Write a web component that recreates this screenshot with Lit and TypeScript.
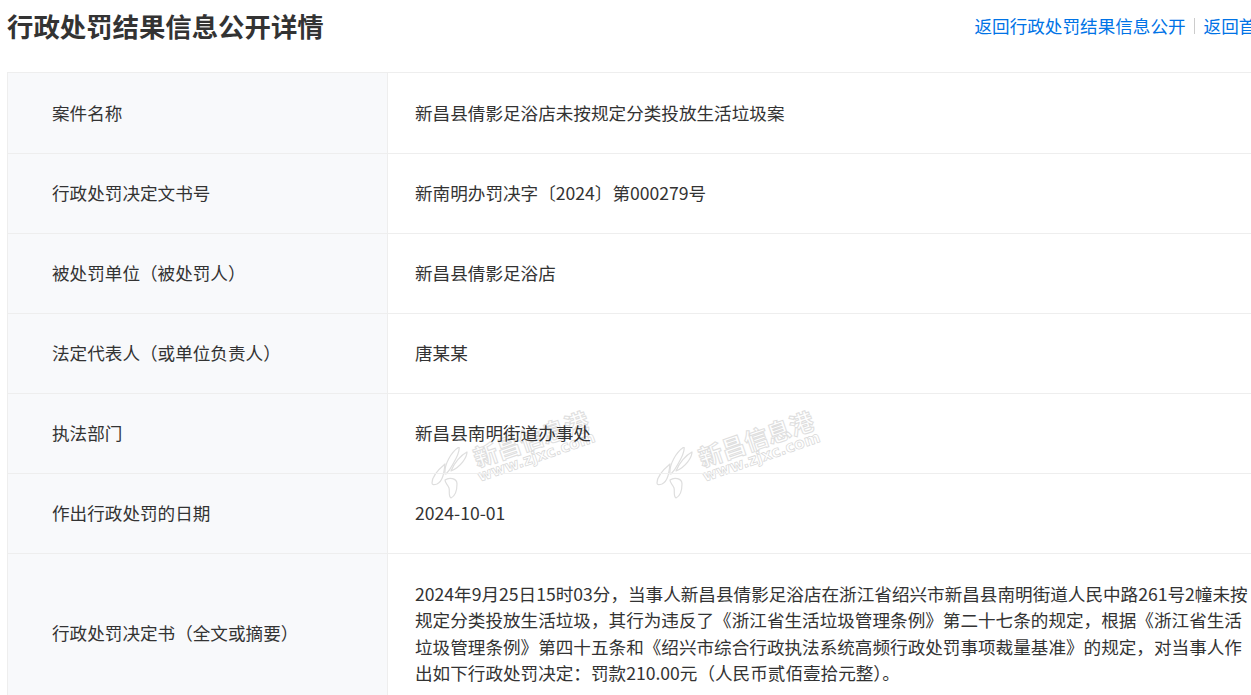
import { LitElement, html, css, svg } from "lit";
import { customElement } from "lit/decorators.js";

const ROWS: [string, string][] = [
  ["案件名称", "新昌县倩影足浴店未按规定分类投放生活垃圾案"],
  ["行政处罚决定文书号", "新南明办罚决字〔2024〕第000279号"],
  ["被处罚单位（被处罚人）", "新昌县倩影足浴店"],
  ["法定代表人（或单位负责人）", "唐某某"],
  ["执法部门", "新昌县南明街道办事处"],
  ["作出行政处罚的日期", "2024-10-01"],
];
const FULL =
  "2024年9月25日15时03分，当事人新昌县倩影足浴店在浙江省绍兴市新昌县南明街道人民中路261号2幢未按规定分类投放生活垃圾，其行为违反了《浙江省生活垃圾管理条例》第二十七条的规定，根据《浙江省生活垃圾管理条例》第四十五条和《绍兴市综合行政执法系统高频行政处罚事项裁量基准》的规定，对当事人作出如下行政处罚决定：罚款210.00元（人民币贰佰壹拾元整）。";

const logo = svg`<svg class="logo" width="40" height="52" viewBox="0 0 40 52" fill="#fff" stroke="#dedede" stroke-width="1.2" stroke-linejoin="round">
  <path d="M3 36 C3 29 10 22 16 17 C15 26 14 34 8 37 C5 38 3 38 3 36 Z"/>
  <path d="M16 27 C15 18 22 5 30 0 C31 4 27 12 24 17 C22 21 19 25 17 27 Z"/>
  <path d="M22 24 C25 16 32 8 38 5 C38 10 32 20 22 24 Z"/>
  <path d="M16 33 C20 30 28 31 28 37 C28 43 26 49 22 51 C19 49 21 44 20 41 C19 38 16 36 16 33 Z"/>
</svg>`;

@customElement("app-root")
export class AppRoot extends LitElement {
  static styles = css`
    :host {
      display: block;
      width: 1251px;
      height: 695px;
      overflow: hidden;
      position: relative;
      background: #fff;
      font-family: "Noto Sans CJK SC", "Noto Sans", sans-serif;
      font-size: 17.6px;
      color: #333;
    }
    .page {
      position: relative;
      z-index: 1;
      width: 1290px;
      padding-left: 7px;
    }
    .head {
      display: flex;
      justify-content: flex-start;
      align-items: center;
      height: 72px;
      padding-bottom: 21px;
      box-sizing: border-box;
      white-space: nowrap;
    }
    h1 {
      margin: 0;
      font-size: 26.4px;
      font-weight: 700;
      line-height: 51px;
      color: #333;
    }
    .links {
      display: flex;
      align-items: center;
      margin-left: auto;
      margin-right: 23px;
      color: #0073e6;
      line-height: 51px;
    }
    .sep {
      width: 1px;
      height: 16px;
      background: #ccc;
      margin: 0 9px 0 8px;
    }
    .table {
      border-top: 1px solid #eee;
      border-left: 1px solid #eee;
      width: 1290px;
    }
    .row {
      display: grid;
      grid-template-columns: 380px 1fr;
      border-bottom: 1px solid #eee;
      min-height: 79px;
    }
    .row:first-child {
      min-height: 80px;
    }
    .lab {
      background: #f8f9fb;
      border-right: 1px solid #eee;
      padding-left: 44px;
      display: flex;
      align-items: center;
      line-height: 26.4px;
    }
    .val {
      padding: 0 27px;
      display: flex;
      align-items: center;
      line-height: 26.4px;
    }
    .row.long {
      min-height: 159px;
    }
    .long .val {
      width: 835px;
      padding: 0 0 0 27px;
      box-sizing: content-box;
    }
    .wm {
      position: absolute;
      z-index: 0;
      top: 400px;
      width: 190px;
      height: 100px;
      pointer-events: none;
    }
    .wm .logo {
      position: absolute;
      left: 17px;
      top: 47px;
    }
    .wm .cn,
    .wm .en {
      position: absolute;
      white-space: nowrap;
      color: #fff;
      transform: rotate(-19deg);
      transform-origin: left center;
      font-weight: 700;
    }
    .wm .cn {
      left: 62px;
      top: 43px;
      font-size: 24px;
      line-height: 30px;
      -webkit-text-stroke: 1px #dedede;
    }
    .wm .en {
      left: 66px;
      top: 69px;
      font-family: "DejaVu Sans", sans-serif;
      font-size: 15.5px;
      line-height: 16px;
      -webkit-text-stroke: 0.7px #d8d8d8;
    }
  `;

  render() {
    return html`
      <div class="wm" style="left:412px">${logo}<span class="cn">新昌信息港</span><span class="en">www.zjxc.com</span></div>
      <div class="wm" style="left:637px">${logo}<span class="cn">新昌信息港</span><span class="en">www.zjxc.com</span></div>
      <div class="page">
        <div class="head">
          <h1>行政处罚结果信息公开详情</h1>
          <div class="links">
            <span>返回行政处罚结果信息公开</span><i class="sep"></i><span>返回首页</span>
          </div>
        </div>
        <div class="table">
          ${ROWS.map(
            ([a, b]) => html`<div class="row"><div class="lab">${a}</div><div class="val">${b}</div></div>`
          )}
          <div class="row long">
            <div class="lab">行政处罚决定书（全文或摘要）</div>
            <div class="val">${FULL}</div>
          </div>
        </div>
      </div>
    `;
  }
}
